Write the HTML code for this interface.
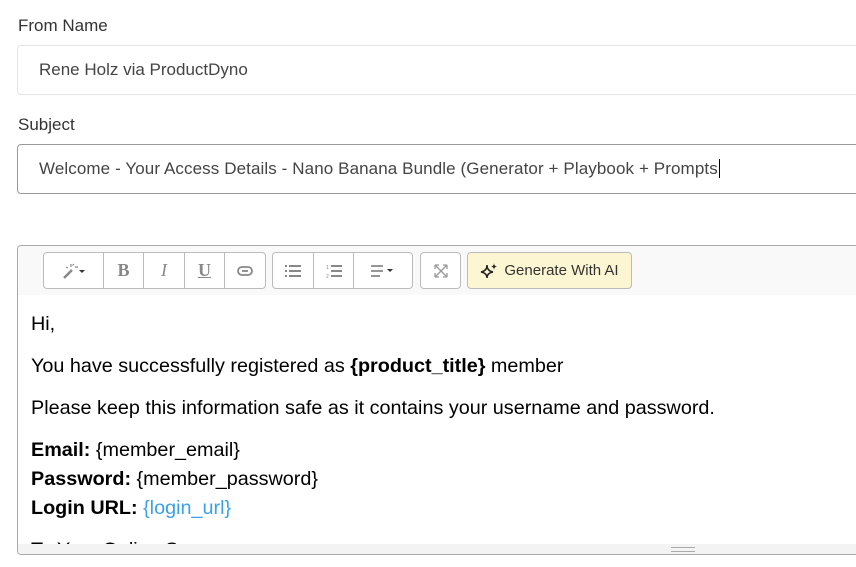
<!DOCTYPE html>
<html><head><style>
*{box-sizing:border-box}
body{margin:0;width:856px;height:567px;overflow:hidden;background:#fff;font-family:"Liberation Sans",Arial,sans-serif;color:#333;position:relative}
.lbl{position:absolute;left:18px;font-size:17px;color:#333}
.inp{position:absolute;left:17px;width:860px;height:50px;border-radius:4px;font-size:17px;color:#444;padding:0 0 0 21px;line-height:48px;white-space:nowrap;overflow:hidden}
.ed{position:absolute;left:17px;top:245px;width:860px;height:310px;border:1px solid #aaa;border-radius:4px;overflow:hidden}
.tb{height:49px;background:#f9f9f9;position:relative}
.btn{position:absolute;top:6px;height:37px;border:1px solid #bbb;background:#fff;color:#888;display:flex;align-items:center;justify-content:center;font-size:16px}
.cnt{padding:15px 13px 0;font-size:19.8px;color:#000;line-height:29px;height:260px;overflow:hidden}
.cnt p{margin:0 0 13px;white-space:nowrap}
.sb{position:absolute;left:0;right:0;bottom:0;height:10px;background:#f3f3f3}
</style></head><body>
<div class="lbl" style="top:16px">From Name</div>
<div class="inp" style="top:45px;border:1px solid #e4e4e4">Rene Holz via ProductDyno</div>
<div class="lbl" style="top:115px">Subject</div>
<div class="inp" style="top:144px;border:1px solid #999;letter-spacing:0.1px">Welcome - Your Access Details - Nano Banana Bundle (Generator + Playbook + Prompts<span style="border-left:1px solid #000;margin-left:1px"></span></div>
<div class="ed">
<div class="tb">
<div class="btn" style="left:25px;width:61px;border-radius:4px 0 0 4px"><svg width="24" height="16" viewBox="0 0 24 16"><path d="M2 15L10 7" stroke="#888" stroke-width="2.5"/><path d="M9 1v3M13 4h3M12 1l-1.5 1.5M4 4l2 1" stroke="#888" stroke-width="1.2"/><path d="M17 7h6l-3 3z" fill="#333"/></svg></div>
<div class="btn" style="left:85px;width:41px;font-family:'Liberation Serif',serif;font-weight:bold;font-size:18px">B</div>
<div class="btn" style="left:125px;width:42px;font-family:'Liberation Serif',serif;font-style:italic;font-size:18px">I</div>
<div class="btn" style="left:166px;width:41px;font-family:'Liberation Serif',serif;text-decoration:underline;font-size:18px;font-weight:bold">U</div>
<div class="btn" style="left:206px;width:42px;border-radius:0 4px 4px 0"><svg width="16" height="10"><rect x="1" y="1" width="14" height="8" rx="4" fill="none" stroke="#888" stroke-width="1.8"/><path d="M5 5h6" stroke="#888" stroke-width="1.8"/></svg></div>
<div class="btn" style="left:254px;width:42px;border-radius:4px 0 0 4px"><svg width="16" height="12"><path d="M0 1h2M4 1h12M0 6h2M4 6h12M0 11h2M4 11h12" stroke="#888" stroke-width="2"/></svg></div>
<div class="btn" style="left:295px;width:41px"><svg width="16" height="14"><path d="M5 2h11M5 7h11M5 12h11" stroke="#888" stroke-width="2"/><text x="0" y="5" font-size="5" fill="#888">1</text><text x="0" y="14" font-size="5" fill="#888">2</text></svg></div>
<div class="btn" style="left:335px;width:60px;border-radius:0 4px 4px 0"><svg width="24" height="12"><path d="M0 1h12M0 6h12M0 11h9" stroke="#888" stroke-width="1.8"/><path d="M16 4h6l-3 3z" fill="#333"/></svg></div>
<div class="btn" style="left:402px;width:41px;border-radius:4px"><svg width="14" height="14"><path d="M1 1l12 12M13 1L1 13M1 1v4M1 1h4M13 13v-4M13 13h-4M13 1h-4M13 1v4M1 13h4M1 13v-4" stroke="#999" stroke-width="1.3" fill="none"/></svg></div>
<div class="btn" style="left:449px;width:165px;border-radius:4px;background:#fdf6d2;color:#333;font-size:15px;border-color:#bbb"><svg width="18" height="16" style="margin-right:6px"><path d="M7 2Q7 8 1 9Q7 10 7 15Q7 10 13 9Q7 8 7 2Z" fill="none" stroke="#222" stroke-width="1.5"/><path d="M14 0Q14 3 11 3.5Q14 4 14 7Q14 4 17 3.5Q14 3 14 0Z" fill="#222"/></svg>Generate With AI</div>
</div>
<div class="cnt">
<p>Hi,</p>
<p>You have successfully registered as <b>{product_title}</b> member</p>
<p>Please keep this information safe as it contains your username and password.</p>
<p><b>Email:</b> {member_email}<br><b>Password:</b> {member_password}<br><b>Login URL:</b> <span style="color:#3aa0e8">{login_url}</span></p>
<p>To Your Online Success</p>
</div>
<div class="sb"><div style="position:absolute;left:653px;top:3px;width:24px;height:5px;border-top:1px solid #aaa;border-bottom:1px solid #aaa"></div></div>
</div>
</body></html>
